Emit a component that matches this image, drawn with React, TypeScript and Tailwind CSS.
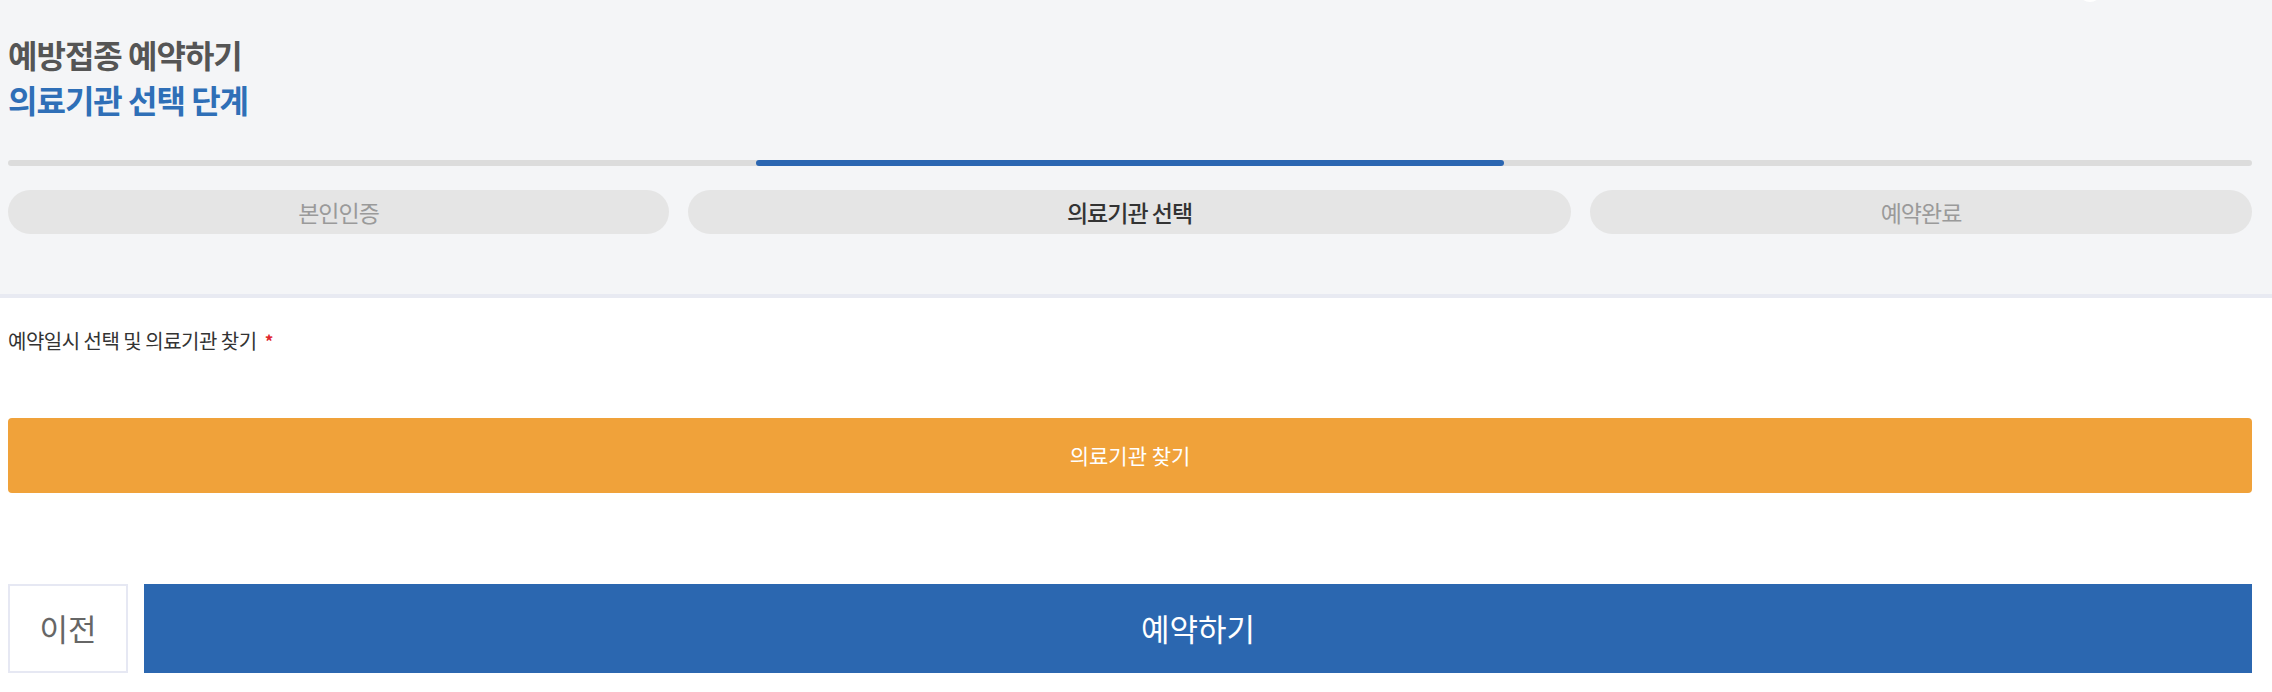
const steps = [
  { label: "본인인증", width: "w-[661px]", active: false },
  { label: "의료기관 선택", width: "flex-1", active: true },
  { label: "예약완료", width: "w-[662px]", active: false },
];

export default function App() {
  return (
    <div
      className="relative w-full overflow-hidden bg-white"
      style={{ fontFamily: '"Noto Sans CJK KR", "Noto Sans", sans-serif' }}
    >
      {/* Top section */}
      <section className="border-b-4 border-[#e8eaf2] bg-[#f4f5f7] pl-2 pr-5 pt-[32px] pb-[60px]">
        <div className="pointer-events-none absolute left-[2078px] top-[-22px] h-6 w-6 rounded-full bg-white" />
        <h1 className="text-[32px] font-bold leading-[45px] tracking-[-1px]">
          <span className="block text-[#555555]">예방접종 예약하기</span>
          <span className="block text-[#2f6fb7]">의료기관 선택 단계</span>
        </h1>

        {/* Progress */}
        <div className="mt-[38px] h-[6px] w-full rounded-full bg-[#dcdcdc]">
          <div className="ml-[748px] h-full w-[748px] rounded-full bg-[#2b66b1]" />
        </div>

        {/* Steps */}
        <div className="mt-6 flex gap-[19px]">
          {steps.map((s) => (
            <div
              key={s.label}
              className={`${s.width} flex h-[44px] items-center justify-center rounded-full bg-[#e5e5e5] text-[23px] tracking-[-1px] ${
                s.active ? "font-medium text-[#333333]" : "text-[#9a9a9a]"
              }`}
            >
              {s.label}
            </div>
          ))}
        </div>
      </section>

      {/* Form */}
      <section className="pl-2 pr-5 pt-[30px] pb-5">
        <div className="flex items-start text-[20px] leading-[26px] tracking-[-0.5px] text-[#333333]">
          <span>예약일시 선택 및 의료기관 찾기</span>
          <span className="ml-2 text-[17px] font-bold text-[#e0262c]">*</span>
        </div>

        <button className="mt-[64px] flex h-[75px] w-full items-center justify-center rounded-[4px] bg-[#f0a23a] text-[21px] text-white">
          의료기관 찾기
        </button>

        <div className="mt-[91px] flex gap-4">
          <button className="flex h-[89px] w-[120px] items-center justify-center border-2 border-[#e6e8f3] bg-white text-[31px] text-[#666666]">
            이전
          </button>
          <button className="flex h-[89px] flex-1 items-center justify-center bg-[#2b67b0] text-[31px] text-white">
            예약하기
          </button>
        </div>
      </section>
    </div>
  );
}
